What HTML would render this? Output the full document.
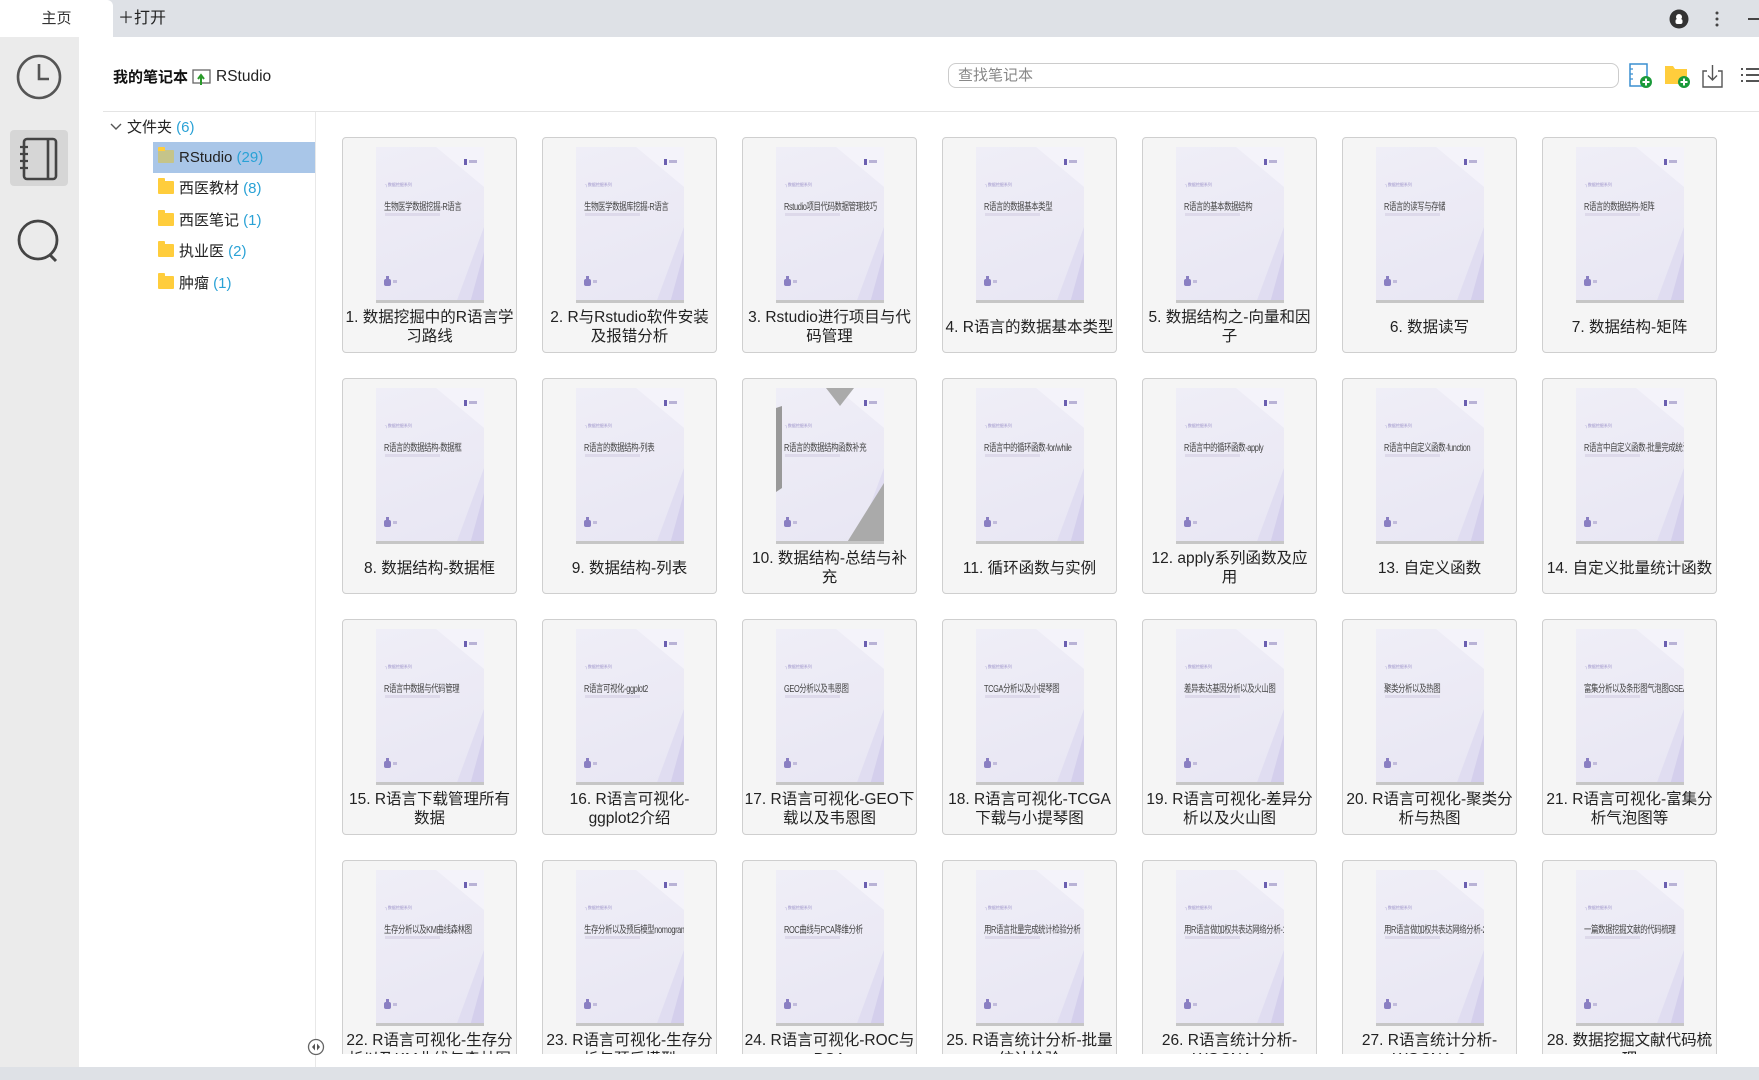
<!DOCTYPE html>
<html><head><meta charset="utf-8">
<style>
*{box-sizing:border-box;margin:0;padding:0}
body{width:1759px;height:1080px;overflow:hidden;background:#fff;font-family:"Liberation Sans","Noto Sans CJK SC",sans-serif;position:relative;color:#222}
.top{position:absolute;left:0;top:0;width:1759px;height:37px;background:#dee1e6}
.tab{position:absolute;left:0;top:0;width:113px;height:37px;background:#fff;border-radius:0 6px 0 0;text-align:center;line-height:37px;font-size:15px;color:#333}
.open{position:absolute;left:118px;top:0;line-height:37px;font-size:16px;color:#222}
.side{position:absolute;left:0;top:37px;width:79px;height:1030px;background:#ebebeb}
.bottom{position:absolute;left:0;top:1067px;width:1759px;height:13px;background:#dee1e6}
.hdr{position:absolute;left:113px;top:66px;font-size:15px;display:flex;align-items:center}
.hdr b{font-weight:bold;color:#111}
.div{position:absolute;left:103px;top:111px;width:1656px;height:1px;background:#e4e4e4}
.vdiv{position:absolute;left:315px;top:112px;width:1px;height:955px;background:#e8e8e8}
.search{position:absolute;left:948px;top:63px;width:671px;height:25px;border:1px solid #ccc;border-radius:8px;font-size:15px;color:#888;padding-left:9px;line-height:23px}
.tree{position:absolute;left:103px;top:112px;width:212px;font-size:15px}
.row{position:absolute;height:31px;line-height:31px;white-space:nowrap}
.cnt{color:#2aa2d6}
.fold{display:inline-block;width:16px;height:13px;background:#ffcd3c;border-radius:1px;vertical-align:-1px;margin-right:5px;position:relative}
.fold:before{content:"";position:absolute;left:0;top:-3px;width:7px;height:4px;background:#ffcd3c;border-radius:1px 1px 0 0}
.grid{position:absolute;left:342px;top:137px;width:1375px;height:917px;overflow:hidden;display:grid;grid-template-columns:repeat(7,175px);grid-auto-rows:216px;column-gap:25px;row-gap:25px}
.card{background:#f5f5f5;border:1px solid #cfcfcf;border-radius:4px;position:relative}
.cov{position:absolute;left:33px;top:9px;width:108px;height:156px;background:linear-gradient(160deg,#efeef7,#e8e6f3);border-bottom:3px solid #c6c6c6;overflow:hidden}
.cov svg{position:absolute;left:0;top:0}
.cov .s{position:absolute;left:9px;top:35px;font-size:4px;color:#9a8fc8}
.cov .t{position:absolute;left:8px;top:51px;font-size:10px;color:#444;white-space:nowrap;transform:scaleX(.74);transform-origin:left;letter-spacing:-.5px}
.cov .u{position:absolute;left:9px;top:66px;width:55px;height:3px;background:#ddd9ea}
.lab{position:absolute;left:0;top:166px;width:173px;height:46px;display:flex;align-items:center;justify-content:center;text-align:center;font-size:15.5px;line-height:19px;color:#222}
</style></head><body>
<div class="top"></div>
<div class="tab">主页</div>
<div class="open">＋打开</div>
<svg style="position:absolute;left:1669px;top:9px" width="20" height="20"><circle cx="10" cy="10" r="9.5" fill="#333"/><circle cx="10" cy="8" r="3" fill="#fff"/><rect x="6.5" y="10" width="7" height="5" rx="2" fill="#fff"/></svg>
<svg style="position:absolute;left:1714px;top:10px" width="6" height="18"><circle cx="3" cy="3" r="1.5" fill="#444"/><circle cx="3" cy="9" r="1.5" fill="#444"/><circle cx="3" cy="15" r="1.5" fill="#444"/></svg>
<div style="position:absolute;left:1748px;top:18px;width:11px;height:1.5px;background:#444"></div>

<div class="side"></div>
<svg style="position:absolute;left:15px;top:53px" width="48" height="48"><circle cx="24" cy="24" r="21" fill="none" stroke="#555" stroke-width="2.6"/><path d="M24 11V26H34" fill="none" stroke="#555" stroke-width="2.6"/></svg>
<div style="position:absolute;left:10px;top:130px;width:58px;height:56px;background:#d6d6d6;border-radius:4px"></div>
<svg style="position:absolute;left:18px;top:137px" width="44" height="44"><rect x="6" y="2" width="32" height="40" rx="3" fill="none" stroke="#444" stroke-width="2.6"/><path d="M30 2V42" stroke="#444" stroke-width="2.6"/><path d="M2 10H10M2 17H10M2 24H10M2 31H10" stroke="#444" stroke-width="2.2"/></svg>
<svg style="position:absolute;left:15px;top:217px" width="48" height="48"><circle cx="23" cy="23" r="19" fill="none" stroke="#444" stroke-width="2.8"/><path d="M34 37L41 44" stroke="#444" stroke-width="3"/></svg>

<div class="hdr"><b>我的笔记本</b><svg width="20" height="18" style="margin:0 4px 0 4px"><rect x="1" y="2" width="17" height="13" fill="none" stroke="#666" stroke-width="1.3"/><path d="M9 17V8M6 11L9 7L12 11" stroke="#2a9a2a" stroke-width="2" fill="none"/></svg><span style="font-size:15.5px;color:#222">RStudio</span></div>
<div class="search">查找笔记本</div>
<svg style="position:absolute;left:1628px;top:63px" width="26" height="26"><rect x="2" y="1" width="17" height="22" fill="#fff" stroke="#3a8fd0" stroke-width="1.5"/><path d="M2 6H5M2 11H5M2 16H5" stroke="#3a8fd0" stroke-width="1.3"/><circle cx="18" cy="19" r="6" fill="#1a9a3a"/><path d="M18 15.5V22.5M14.5 19H21.5" stroke="#fff" stroke-width="2"/></svg>
<svg style="position:absolute;left:1664px;top:63px" width="28" height="26"><path d="M1 3H9L11 6H23V21H1Z" fill="#ffcd3c"/><circle cx="20" cy="19" r="6" fill="#1a9a3a"/><path d="M20 15.5V22.5M16.5 19H23.5" stroke="#fff" stroke-width="2"/></svg>
<svg style="position:absolute;left:1701px;top:63px" width="24" height="26"><path d="M6 8H2V24H21V8H17" fill="none" stroke="#555" stroke-width="1.4"/><path d="M11.5 2V17M7 12.5L11.5 17L16 12.5" fill="none" stroke="#555" stroke-width="1.4"/></svg>
<svg style="position:absolute;left:1740px;top:66px" width="19" height="20"><path d="M1 3H3M1 9H3M1 15H3M6 3H19M6 9H19M6 15H19" stroke="#555" stroke-width="2"/></svg>

<div class="div"></div>
<div class="vdiv"></div>
<svg style="position:absolute;left:307px;top:1038px" width="18" height="18"><circle cx="9" cy="9" r="7.5" fill="#fff" stroke="#666" stroke-width="1.3"/><path d="M8 5.5L5 9L8 12.5ZM10 5.5L13 9L10 12.5Z" fill="#555"/></svg>

<div class="tree">
<div class="row" style="left:6px;top:0"><svg width="14" height="10" style="margin-right:4px"><path d="M2 2L7 7L12 2" fill="none" stroke="#555" stroke-width="1.4"/></svg>文件夹 <span class="cnt">(6)</span></div>
<div class="row" style="left:50px;top:30px;width:162px;background:#a9c6e8;padding-left:5px"><span class="fold" style="background:#c5c48a"></span>RStudio <span class="cnt">(29)</span></div>
<div class="row" style="left:55px;top:61px"><span class="fold"></span>西医教材 <span class="cnt">(8)</span></div>
<div class="row" style="left:55px;top:93px"><span class="fold"></span>西医笔记 <span class="cnt">(1)</span></div>
<div class="row" style="left:55px;top:124px"><span class="fold"></span>执业医 <span class="cnt">(2)</span></div>
<div class="row" style="left:55px;top:156px"><span class="fold"></span>肿瘤 <span class="cnt">(1)</span></div>
</div>

<svg width="0" height="0" style="position:absolute"><defs>
<g id="cv"><polygon points="60,0 108,0 108,40" fill="#f4f3fa"/><polygon points="108,80 108,156 80,156" fill="#e0ddf1"/><polygon points="108,105 108,156 94,156" fill="#d4cfec"/><rect x="88" y="12" width="3" height="6" fill="#6b5fb0"/><rect x="93" y="13" width="8" height="3" fill="#b9b3d6"/><rect x="10" y="129" width="3" height="3" fill="#8a7fc2"/><rect x="8" y="132" width="7" height="7" rx="2" fill="#8a7fc2"/><rect x="17" y="133" width="4" height="3" fill="#c2bcdc"/></g>
</defs></svg>

<div class="grid">
<div class="card"><div class="cov"><svg width="108" height="156"><use href="#cv"/></svg><div class="s">┐数据挖掘系列</div><div class="t">生物医学数据挖掘-R语言</div><div class="u"></div></div><div class="lab">1. 数据挖掘中的R语言学<br>习路线</div></div>
<div class="card"><div class="cov"><svg width="108" height="156"><use href="#cv"/></svg><div class="s">┐数据挖掘系列</div><div class="t">生物医学数据库挖掘-R语言</div><div class="u"></div></div><div class="lab">2. R与Rstudio软件安装<br>及报错分析</div></div>
<div class="card"><div class="cov"><svg width="108" height="156"><use href="#cv"/></svg><div class="s">┐数据挖掘系列</div><div class="t">Rstudio项目代码数据管理技巧</div><div class="u"></div></div><div class="lab">3. Rstudio进行项目与代<br>码管理</div></div>
<div class="card"><div class="cov"><svg width="108" height="156"><use href="#cv"/></svg><div class="s">┐数据挖掘系列</div><div class="t">R语言的数据基本类型</div><div class="u"></div></div><div class="lab">4. R语言的数据基本类型</div></div>
<div class="card"><div class="cov"><svg width="108" height="156"><use href="#cv"/></svg><div class="s">┐数据挖掘系列</div><div class="t">R语言的基本数据结构</div><div class="u"></div></div><div class="lab">5. 数据结构之-向量和因<br>子</div></div>
<div class="card"><div class="cov"><svg width="108" height="156"><use href="#cv"/></svg><div class="s">┐数据挖掘系列</div><div class="t">R语言的读写与存储</div><div class="u"></div></div><div class="lab">6. 数据读写</div></div>
<div class="card"><div class="cov"><svg width="108" height="156"><use href="#cv"/></svg><div class="s">┐数据挖掘系列</div><div class="t">R语言的数据结构-矩阵</div><div class="u"></div></div><div class="lab">7. 数据结构-矩阵</div></div>

<div class="card"><div class="cov"><svg width="108" height="156"><use href="#cv"/></svg><div class="s">┐数据挖掘系列</div><div class="t">R语言的数据结构-数据框</div><div class="u"></div></div><div class="lab">8. 数据结构-数据框</div></div>
<div class="card"><div class="cov"><svg width="108" height="156"><use href="#cv"/></svg><div class="s">┐数据挖掘系列</div><div class="t">R语言的数据结构-列表</div><div class="u"></div></div><div class="lab">9. 数据结构-列表</div></div>
<div class="card"><div class="cov"><svg width="108" height="156"><use href="#cv"/><polygon points="50,0 78,0 64,18" fill="#aaa"/><polygon points="0,20 6,18 6,100 0,104" fill="#999"/><polygon points="108,95 108,156 70,156" fill="#aaa"/></svg><div class="s">┐数据挖掘系列</div><div class="t">R语言的数据结构函数补充</div><div class="u"></div></div><div class="lab">10. 数据结构-总结与补<br>充</div></div>
<div class="card"><div class="cov"><svg width="108" height="156"><use href="#cv"/></svg><div class="s">┐数据挖掘系列</div><div class="t">R语言中的循环函数-for/while</div><div class="u"></div></div><div class="lab">11. 循环函数与实例</div></div>
<div class="card"><div class="cov"><svg width="108" height="156"><use href="#cv"/></svg><div class="s">┐数据挖掘系列</div><div class="t">R语言中的循环函数-apply</div><div class="u"></div></div><div class="lab">12. apply系列函数及应<br>用</div></div>
<div class="card"><div class="cov"><svg width="108" height="156"><use href="#cv"/></svg><div class="s">┐数据挖掘系列</div><div class="t">R语言中自定义函数-function</div><div class="u"></div></div><div class="lab">13. 自定义函数</div></div>
<div class="card"><div class="cov"><svg width="108" height="156"><use href="#cv"/></svg><div class="s">┐数据挖掘系列</div><div class="t">R语言中自定义函数-批量完成统计</div><div class="u"></div></div><div class="lab">14. 自定义批量统计函数</div></div>

<div class="card"><div class="cov"><svg width="108" height="156"><use href="#cv"/></svg><div class="s">┐数据挖掘系列</div><div class="t">R语言中数据与代码管理</div><div class="u"></div></div><div class="lab">15. R语言下载管理所有<br>数据</div></div>
<div class="card"><div class="cov"><svg width="108" height="156"><use href="#cv"/></svg><div class="s">┐数据挖掘系列</div><div class="t">R语言可视化-ggplot2</div><div class="u"></div></div><div class="lab">16. R语言可视化-<br>ggplot2介绍</div></div>
<div class="card"><div class="cov"><svg width="108" height="156"><use href="#cv"/></svg><div class="s">┐数据挖掘系列</div><div class="t">GEO分析以及韦恩图</div><div class="u"></div></div><div class="lab">17. R语言可视化-GEO下<br>载以及韦恩图</div></div>
<div class="card"><div class="cov"><svg width="108" height="156"><use href="#cv"/></svg><div class="s">┐数据挖掘系列</div><div class="t">TCGA分析以及小提琴图</div><div class="u"></div></div><div class="lab">18. R语言可视化-TCGA<br>下载与小提琴图</div></div>
<div class="card"><div class="cov"><svg width="108" height="156"><use href="#cv"/></svg><div class="s">┐数据挖掘系列</div><div class="t">差异表达基因分析以及火山图</div><div class="u"></div></div><div class="lab">19. R语言可视化-差异分<br>析以及火山图</div></div>
<div class="card"><div class="cov"><svg width="108" height="156"><use href="#cv"/></svg><div class="s">┐数据挖掘系列</div><div class="t">聚类分析以及热图</div><div class="u"></div></div><div class="lab">20. R语言可视化-聚类分<br>析与热图</div></div>
<div class="card"><div class="cov"><svg width="108" height="156"><use href="#cv"/></svg><div class="s">┐数据挖掘系列</div><div class="t">富集分析以及条形图气泡图GSEA</div><div class="u"></div></div><div class="lab">21. R语言可视化-富集分<br>析气泡图等</div></div>

<div class="card"><div class="cov"><svg width="108" height="156"><use href="#cv"/></svg><div class="s">┐数据挖掘系列</div><div class="t">生存分析以及KM曲线森林图</div><div class="u"></div></div><div class="lab">22. R语言可视化-生存分<br>析以及KM曲线与森林图</div></div>
<div class="card"><div class="cov"><svg width="108" height="156"><use href="#cv"/></svg><div class="s">┐数据挖掘系列</div><div class="t">生存分析以及预后模型nomogram</div><div class="u"></div></div><div class="lab">23. R语言可视化-生存分<br>析与预后模型</div></div>
<div class="card"><div class="cov"><svg width="108" height="156"><use href="#cv"/></svg><div class="s">┐数据挖掘系列</div><div class="t">ROC曲线与PCA降维分析</div><div class="u"></div></div><div class="lab">24. R语言可视化-ROC与<br>PCA</div></div>
<div class="card"><div class="cov"><svg width="108" height="156"><use href="#cv"/></svg><div class="s">┐数据挖掘系列</div><div class="t">用R语言批量完成统计检验分析</div><div class="u"></div></div><div class="lab">25. R语言统计分析-批量<br>统计检验</div></div>
<div class="card"><div class="cov"><svg width="108" height="156"><use href="#cv"/></svg><div class="s">┐数据挖掘系列</div><div class="t">用R语言做加权共表达网络分析-1</div><div class="u"></div></div><div class="lab">26. R语言统计分析-<br>WGCNA-1</div></div>
<div class="card"><div class="cov"><svg width="108" height="156"><use href="#cv"/></svg><div class="s">┐数据挖掘系列</div><div class="t">用R语言做加权共表达网络分析-2</div><div class="u"></div></div><div class="lab">27. R语言统计分析-<br>WGCNA-2</div></div>
<div class="card"><div class="cov"><svg width="108" height="156"><use href="#cv"/></svg><div class="s">┐数据挖掘系列</div><div class="t">一篇数据挖掘文献的代码梳理</div><div class="u"></div></div><div class="lab">28. 数据挖掘文献代码梳<br>理</div></div>
</div>
<div class="bottom"></div>
</body></html>
